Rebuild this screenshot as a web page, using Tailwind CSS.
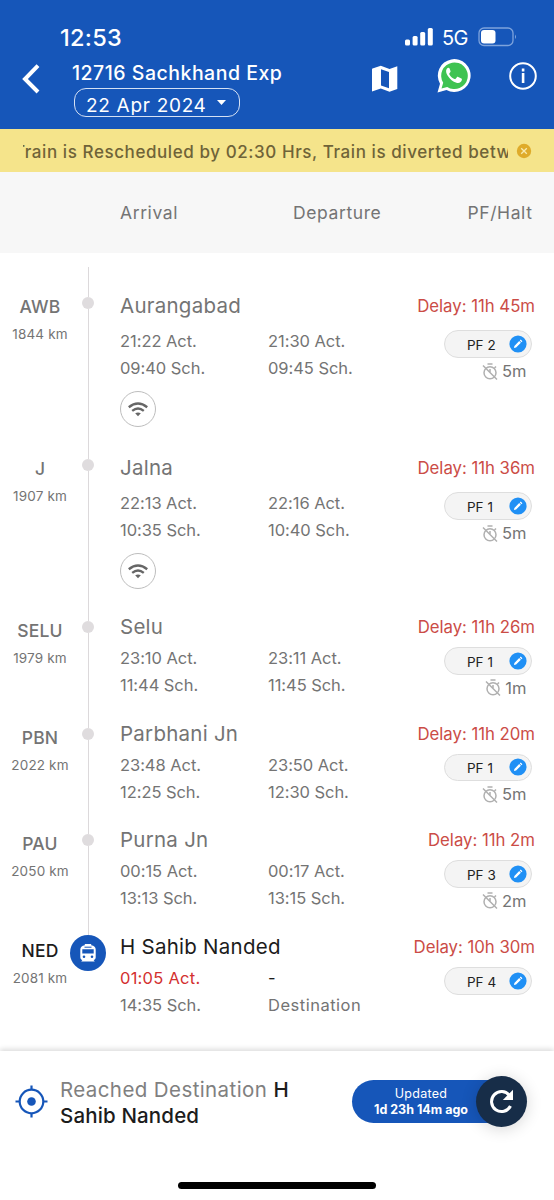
<!DOCTYPE html>
<html lang="en">
<head>
<meta charset="utf-8">
<title>12716 Sachkhand Exp</title>
<script src="https://cdn.jsdelivr.net/npm/@tailwindcss/browser@4"></script>
</head>
<body class="bg-white">
<div class="w-[554px] h-[1200px] overflow-hidden flex flex-col bg-white font-['Inter','Liberation_Sans',sans-serif] text-[#747474]">
  <header class="h-[129px] shrink-0 bg-[#1656b9] text-white">
    <div class="flex items-center h-[52px] pt-[22px] pl-[60px] pr-[36px]">
      <span class="mt-px text-[23.500px] leading-[30px] font-medium tracking-[0.3px]">12:53</span>
      <svg class="ml-auto" width="28" height="18" viewBox="0 0 28 18" fill="#fff"><rect x="0" y="11.5" width="5" height="6" rx="1.5"/><rect x="7.600" y="8" width="5" height="9.500" rx="1.500"/><rect x="15.200" y="4" width="5" height="13.500" rx="1.500"/><rect x="22.800" y="0" width="5" height="17.500" rx="1.500"/></svg>
      <span class="ml-[9px] mt-[2px] text-[20px] leading-[30px] tracking-[-0.6px] w-[27px]">5G</span>
      <svg class="ml-[9px]" width="40" height="20" viewBox="0 0 40 20" fill="none"><rect x="1" y="1" width="34" height="17.500" rx="5" stroke="#7ea3dc" stroke-width="1.300"/><rect x="3" y="3" width="14.500" height="13.500" rx="3" fill="#fff"/><path d="M37 7.500q2 2.300 0 4.600z" fill="#7ea3dc"/></svg>
    </div>
    <div class="flex h-[77px]">
      <svg class="mt-3 ml-[21px] shrink-0" width="19" height="30" viewBox="0 0 19 30" fill="none" stroke="#fff" stroke-width="4"><path d="M17 1.700 4 15 17 28"/></svg>
      <div class="ml-[32px] mt-[9px]">
        <div class="text-[19.500px] leading-[24px] font-medium tracking-[0.500px] whitespace-nowrap">12716 Sachkhand Exp</div>
        <div class="mt-[3px] ml-[2px] w-[166px] h-[29px] rounded-[12px] border-[1.500px] border-[#d5e1f4] flex items-center pl-[11px] overflow-hidden">
          <span class="h-[24px] overflow-hidden text-[19px] leading-[30px] tracking-[0.700px] whitespace-nowrap">22 Apr 2024</span>
          <svg class="ml-auto mr-[13px]" width="9" height="5" viewBox="0 0 9 5" fill="#fff"><path d="M0 0h9L4.500 5z"/></svg>
        </div>
      </div>
      <svg class="ml-auto mt-[13px]" width="28" height="28" viewBox="0 0 28 28"><path fill="#fff" fill-rule="evenodd" d="M1.500 3.500Q1 3.500 1 4.500V26.500L9.800 23.500 18.500 26.700 26.300 24V1.200L18.500 4 9.800.800zM10 4.300 18 7V23.200L10 20.400z"/></svg>
      <svg class="ml-[38px] mt-[7px]" width="34" height="34" viewBox="0 0 34 34"><path fill="#fff" d="M.500 33.500 3 24.700A16.400 16.400 0 1 1 9.500 31z"/><path fill="#3fc351" d="M4.500 29.500 6.200 23.800A13.300 13.300 0 1 1 10.200 27.900z"/><path fill="#fff" d="M12.600 9.400c-.500-.900-1.900-.700-2.600.200-1.600 1.900-1 4.700.900 7.500 2.200 3.200 4.900 5.700 8.500 6.700 2.800.800 5.200-.500 5.500-3 .100-.600 0-.900-.500-1.200l-3.200-1.600c-.600-.300-.900-.200-1.300.300l-1.200 1.500c-.400.400-.700.400-1.200.200-2.200-.9-3.900-2.400-5.100-4.500-.3-.5-.2-.8.100-1.200l.9-1.200c.2-.4.200-.6.100-1z"/></svg>
      <svg class="ml-[38px] mr-[17.500px] mt-[10px]" width="28" height="28" viewBox="0 0 28 28"><circle cx="14" cy="14" r="12.800" fill="none" stroke="#fff" stroke-width="2"/><rect x="12.800" y="6.500" width="2.600" height="3" fill="#fff"/><rect x="12.800" y="11" width="2.600" height="10" fill="#fff"/></svg>
    </div>
  </header>
  <div class="h-[43px] shrink-0 bg-[#f5e48b] flex items-center pl-[23px] pr-[22px]">
    <div class="w-[485px] overflow-hidden whitespace-nowrap text-[17px] leading-[24px] pt-[2px] font-medium text-[#6f6338]"><span class="-ml-[9px] tracking-[0.580px]">Train is Rescheduled by 02:30 Hrs, Train is diverted betw</span></div>
    <svg class="ml-auto shrink-0" width="16" height="16" viewBox="0 0 16 16"><circle cx="8" cy="8" r="7.200" fill="#dfab2a"/><path d="m5.200 5.200 5.600 5.600m0-5.600-5.600 5.600" stroke="#f8ebb0" stroke-width="1.300"/></svg>
  </div>
  <div class="h-[81px] shrink-0 bg-[#f7f7f7] flex items-center pt-[2px] pl-[120px] pr-[21.500px] text-[17.500px] tracking-[0.600px]">
    <span class="w-[173px]">Arrival</span><span>Departure</span><span class="ml-auto">PF/Halt</span>
  </div>
  <main id="stops" class="flex flex-col h-[798px] shrink-0 pt-[14px]"></main>
  <footer class="relative grow bg-white shadow-[0_-2px_5px_rgba(0,0,0,0.14)]">
    <div class="flex items-start h-[134px] pt-[24px] pl-[15px] pr-[27px]">
      <svg class="mt-[10px]" width="33" height="33" viewBox="0 0 33 33" fill="none" stroke="#1656b9" stroke-width="2.200"><circle cx="16.500" cy="16.500" r="11.800"/><path d="M16.500 .500v4M16.500 28.500v4M.500 16.500h4M28.500 16.500h4"/><circle cx="16.500" cy="16.500" r="4.300" fill="#1656b9" stroke="none"/></svg>
      <div class="ml-[12px] mt-[2px] text-[20.500px] leading-[26px] text-[#808080] whitespace-nowrap"><div class="tracking-[0.400px]">Reached Destination <span class="font-medium text-[#1c1c1c]">H</span></div><div class="font-medium tracking-[0.150px] text-[#1c1c1c]">Sahib Nanded</div></div>
      <div class="ml-auto mt-px flex items-center">
        <div class="w-[150px] h-[43px] rounded-l-full bg-[#1656b9] text-white text-center text-[12.500px] leading-[16px] pt-[6px] pr-[12px] whitespace-nowrap"><div class="tracking-[0.300px]">Updated</div><div class="font-bold">1d 23h 14m ago</div></div>
        <div class="-ml-[26px] w-[51px] h-[51px] rounded-full bg-[#172d48] shadow-[0_2px_16px_rgba(0,0,0,0.16)] flex items-center justify-center">
          <svg width="25" height="25" viewBox="0 0 25 25"><path d="M21.500 17A10 10 0 1 1 20.500 6.500" fill="none" stroke="#fff" stroke-width="3"/><path d="M24 .8V11H13.800z" fill="#fff"/></svg>
        </div>
      </div>
    </div>
    <div class="mx-auto w-[198px] h-[7px] -mt-[3px] rounded-full bg-black"></div>
  </footer>
</div>
<script>
const stops = [
  {code:'AWB', km:'1844 km', name:'Aurangabad', delay:'11h 45m', a:'21:22', as:'09:40', d:'21:30', ds:'09:45', pf:2, halt:'5m', wifi:true},
  {code:'J', km:'1907 km', name:'Jalna', delay:'11h 36m', a:'22:13', as:'10:35', d:'22:16', ds:'10:40', pf:1, halt:'5m', wifi:true},
  {code:'SELU', km:'1979 km', name:'Selu', delay:'11h 26m', a:'23:10', as:'11:44', d:'23:11', ds:'11:45', pf:1, halt:'1m'},
  {code:'PBN', km:'2022 km', name:'Parbhani Jn', delay:'11h 20m', a:'23:48', as:'12:25', d:'23:50', ds:'12:30', pf:1, halt:'5m'},
  {code:'PAU', km:'2050 km', name:'Purna Jn', delay:'11h 2m', a:'00:15', as:'13:13', d:'00:17', ds:'13:15', pf:3, halt:'2m'},
  {code:'NED', km:'2081 km', name:'H Sahib Nanded', delay:'10h 30m', a:'01:05', as:'14:35', pf:4, last:true}
];
const wifi = `<div class="mt-[9px] -ml-[0.500px] w-9 h-9 rounded-full border border-[#bdbdbd] flex items-center justify-center"><svg width="20" height="15" viewBox="0 0 20 15" fill="none" stroke="#666" stroke-width="2.4"><path d="M.8 5.200Q10-2.300 19.200 5.200M4.200 8.900Q10 4.300 15.800 8.900"/><path d="M7.200 11.300Q10 9.500 12.800 11.300L10 14.300z" fill="#666" stroke="none"/></svg></div>`;
const bus = `<div class="w-9 h-9 rounded-full bg-[#1656b9] flex items-center justify-center"><svg width="16" height="18" viewBox="0 0 16 18"><path fill="#fff" fill-rule="evenodd" d="M4.800 0h6.400v1.300c3 .3 4.500 1.900 4.500 4.500v7.400c0 1.500-.8 2.500-2.100 2.800l1.200 1.500H1.200L2.400 16C1.100 15.700.3 14.700.3 13.200V5.800c0-2.600 1.500-4.200 4.500-4.500zM2.300 5.200v4.300h11.400V5.200zM4 11.500a1.300 1.300 0 1 0 0 2.600 1.300 1.300 0 0 0 0-2.600m8 0a1.300 1.300 0 1 0 0 2.600 1.300 1.300 0 0 0 0-2.600z"/><path d="M4.500 3.200h7" stroke="#1656b9" stroke-width="1"/></svg></div>`;
const timer = `<svg width="16" height="17" viewBox="0 0 16 17" fill="none" stroke="#b0b0b0" stroke-width="1.500"><circle cx="8" cy="9.700" r="6"/><path d="M5.500 1h5M8 6v3M12.500 5l1.500-1.500M1 2.500l14 14"/></svg>`;
document.getElementById('stops').innerHTML = stops.map(s => `
  <section class="flex shrink-0 ${s.wifi ? 'h-[162px]' : 'h-[106.6px]'}">
    <div class="w-20 -mr-[10px] pt-[30px] text-center shrink-0">
      <div class="text-[17.500px] leading-5 font-medium tracking-[0.150px] ${s.last ? 'text-[#1c1c1c]' : ''}">${s.code}</div>
      <div class="mt-[7px] text-[13.500px] leading-5 tracking-[0.150px]">${s.km}</div>
    </div>
    <div class="w-9 shrink-0 flex flex-col items-center">
      <div class="w-px bg-[#dcd9db] ${s.last ? 'h-6' : 'h-[30px]'}"></div>
      ${s.last ? bus : '<div class="w-3 h-3 shrink-0 rounded-full bg-[#dfdcde]"></div><div class="w-px grow bg-[#dcd9db]"></div>'}
    </div>
    <div class="ml-[14px] w-[290px] shrink-0 whitespace-nowrap ${s.wifi ? 'pt-[25px]' : 'pt-[22px]'}">
      <div class="text-[20.500px] leading-[28px] tracking-[0.250px] ${s.last ? 'text-[#1c1c1c]' : ''}">${s.name}</div>
      <div class="flex text-[16.500px] leading-[27px] tracking-[-0.050px] ${s.wifi ? 'mt-[8px]' : 'mt-[4px]'}">
        <div class="w-[148px]"><div class="${s.last ? 'text-[#d3302f] tracking-[0.250px]' : ''}">${s.a} Act.</div><div>${s.as} Sch.</div></div>
        <div>${s.last ? '<div class="text-[#1c1c1c]">-</div><div class="tracking-[0.500px]">Destination</div>' : `<div>${s.d} Act.</div><div>${s.ds} Sch.</div>`}</div>
      </div>
      ${s.wifi ? wifi : ''}
    </div>
    <div class="-ml-[20px] w-[145px] shrink-0 flex flex-col items-end whitespace-nowrap ${s.wifi ? 'pt-[29px]' : 'pt-[26px]'}">
      <div class="text-[16.800px] leading-5 tracking-[-0.030px] text-[#cb4c46]">Delay: ${s.delay}</div>
      <div class="mr-[3px] w-[88px] h-7 rounded-full border border-[#dedede] bg-[#f4f4f4] flex items-center pl-[22px] pr-[4px] text-[13.500px] text-[#222] ${s.wifi ? 'mt-[14px]' : 'mt-[10px]'}">
        <span class="mt-[2px]">PF ${s.pf}</span>
        <svg class="ml-auto" width="18" height="18" viewBox="0 0 18 18"><circle cx="9" cy="9" r="8.600" fill="#2090f5"/><path d="m4.900 13.100.5-2.200 4.800-4.800 1.700 1.700-4.800 4.800zM10.800 5.500l.9-.9 1.700 1.700-.9.9z" fill="#fff"/></svg>
      </div>
      ${s.halt ? `<div class="mt-[3px] mr-[8.500px] flex items-center gap-1 text-[16.500px] leading-[20px]">${timer}<span>${s.halt}</span></div>` : ''}
    </div>
  </section>`).join('');
</script>
</body>
</html>
